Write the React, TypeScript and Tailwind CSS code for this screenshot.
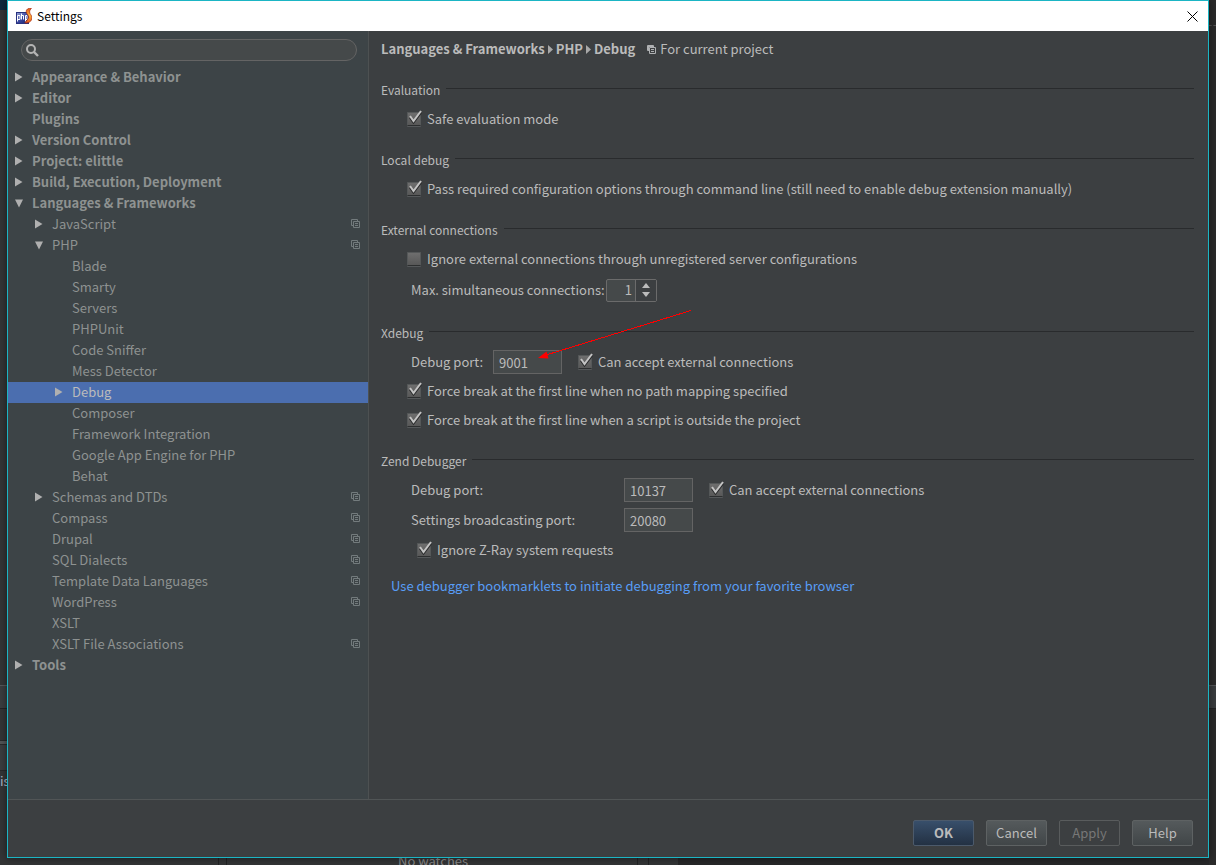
import { useId, useState, type ReactNode } from "react";

type Node = {
  label: string;
  level: number;
  state?: "open" | "closed";
  project?: boolean;
  selected?: boolean;
};

const nodes: Node[] = [
  { label: "Appearance & Behavior", level: 0, state: "closed" },
  { label: "Editor", level: 0, state: "closed" },
  { label: "Plugins", level: 0 },
  { label: "Version Control", level: 0, state: "closed" },
  { label: "Project: elittle", level: 0, state: "closed" },
  { label: "Build, Execution, Deployment", level: 0, state: "closed" },
  { label: "Languages & Frameworks", level: 0, state: "open" },
  { label: "JavaScript", level: 1, state: "closed", project: true },
  { label: "PHP", level: 1, state: "open", project: true },
  { label: "Blade", level: 2 },
  { label: "Smarty", level: 2 },
  { label: "Servers", level: 2 },
  { label: "PHPUnit", level: 2 },
  { label: "Code Sniffer", level: 2 },
  { label: "Mess Detector", level: 2 },
  { label: "Debug", level: 2, state: "closed", selected: true },
  { label: "Composer", level: 2 },
  { label: "Framework Integration", level: 2 },
  { label: "Google App Engine for PHP", level: 2 },
  { label: "Behat", level: 2 },
  { label: "Schemas and DTDs", level: 1, state: "closed", project: true },
  { label: "Compass", level: 1, project: true },
  { label: "Drupal", level: 1, project: true },
  { label: "SQL Dialects", level: 1, project: true },
  { label: "Template Data Languages", level: 1, project: true },
  { label: "WordPress", level: 1, project: true },
  { label: "XSLT", level: 1 },
  { label: "XSLT File Associations", level: 1, project: true },
  { label: "Tools", level: 0, state: "closed" },
];

const indents = ["pl-[7px]", "pl-[27px]", "pl-[47px]"];

function Disclosure({ state }: { state?: "open" | "closed" }) {
  return (
    <svg className="h-2.5 w-[9px] shrink-0" viewBox="0 0 9 10" fill="#b0b0b0" aria-hidden="true">
      {state === "closed" && <path d="M0 0.5 7.5 5 0 9.5Z" />}
      {state === "open" && <path d="M0 1.5H8L4 9.5Z" />}
    </svg>
  );
}

function ProjectIcon() {
  return (
    <svg className="h-[9px] w-[9px] shrink-0" viewBox="0 0 9 9" fill="none" stroke="#737b7d" aria-hidden="true">
      <path d="M2.5 6.5H0.5V0.5H6.5V2.5M2.5 2.5H8.5V8.5H2.5ZM4 4.5H7M4 6.5H7" />
    </svg>
  );
}

function PhpStormIcon() {
  return (
    <svg className="h-4 w-4 shrink-0" viewBox="0 0 16 16" aria-hidden="true">
      <defs>
        <linearGradient id="box" x1="0" y1="0" x2="1" y2="1">
          <stop offset="0" stopColor="#9aa9dc" />
          <stop offset="0.5" stopColor="#3a479f" />
          <stop offset="1" stopColor="#151c62" />
        </linearGradient>
        <linearGradient id="flame" x1="0" y1="0" x2="0" y2="1">
          <stop offset="0" stopColor="#e0571a" />
          <stop offset="0.5" stopColor="#ffb13a" />
          <stop offset="1" stopColor="#e3541c" />
        </linearGradient>
      </defs>
      <rect x="0.5" y="4.5" width="12" height="11" fill="url(#box)" stroke="#29337f" />
      <path d="M1.5 13.5V7.5H4V11.5H1.5M5.5 5.5V11.5M5.5 7.5H7.5V11.5M9.5 13.5V7.5H11V11.5H9.5" fill="none" stroke="#fff" />
      <path d="M15.5 0.3C12.2 0 10 1.2 10.2 3.8 10.4 6.2 12.8 7.2 12.6 9.2 12.4 11.2 10.8 12.4 8.8 14.8 12.6 15.6 15.8 13.4 15.9 9.8 16 7.2 13.6 6 13.6 4 13.6 2.6 14.4 1.2 15.5 0.3Z" fill="url(#flame)" stroke="#a5260e" strokeWidth="0.7" />
    </svg>
  );
}

function Check({ label, checked = true }: { label: string; checked?: boolean }) {
  return (
    <label className="flex items-center gap-1.5">
      <span className="relative flex h-3.5 w-3.5">
        <input
          type="checkbox"
          defaultChecked={checked}
          className="peer h-3.5 w-3.5 appearance-none rounded-[1px] border border-[#555859] border-b-[#2d2f30] bg-linear-to-b from-[#6e6e6e] to-[#585858] shadow-[0_1px_0_#55585a]"
        />
        <svg
          className="pointer-events-none absolute -top-0.5 left-0 hidden h-4 w-4 peer-checked:block"
          viewBox="0 0 16 16"
          fill="none"
          aria-hidden="true"
        >
          <path d="M3 7.5 6.5 12.5 14 2.5" stroke="#2a2b2c" strokeWidth="2.2" />
          <path d="M3 6 6.5 11 14 1" stroke="#c4c4c4" strokeWidth="2" />
        </svg>
      </span>
      {label}
    </label>
  );
}

function PortInput({ id, value }: { id: string; value: string }) {
  return (
    <input
      id={id}
      type="text"
      defaultValue={value}
      className="h-6 w-[69px] border border-[#646464] bg-[#45494a] px-[5px] text-[13px] text-[#bbbbbb] outline-none"
    />
  );
}

function Section({ title, tight, children }: { title: string; tight?: boolean; children: ReactNode }) {
  return (
    <section className="flex flex-col gap-[7px]">
      <h2 className="flex items-center gap-1.5 text-xs leading-5">
        {title}
        <span className="mb-[3px] h-px flex-1 bg-[#292b2d]" />
      </h2>
      <div className={tight ? "flex flex-col gap-[5px]" : "flex flex-col gap-1.5"}>{children}</div>
    </section>
  );
}

function CheckRow({ label, checked }: { label: string; checked?: boolean }) {
  return (
    <div className="flex h-6 items-center pl-[26px]">
      <Check label={label} checked={checked} />
    </div>
  );
}

function Crumb() {
  return (
    <svg className="h-[9px] w-[5px]" viewBox="0 0 5 9" fill="#a8a8a8" aria-hidden="true">
      <path d="M0 0 5 4.5 0 9Z" />
    </svg>
  );
}

function Tree() {
  return (
    <ul className="mt-1.5 text-[13px] text-[#8e9291]">
      {nodes.map((n) => (
        <li
          key={n.label}
          className={`flex h-[21px] items-center gap-2 pr-2 pb-0.5 ${indents[n.level]} ${n.level === 0 ? "font-bold" : ""} ${
            n.selected ? "bg-[#4b6eaf] text-[#bbbbbb]" : ""
          }`}
        >
          <Disclosure state={n.state} />
          <span className="flex-1 whitespace-nowrap leading-5">{n.label}</span>
          {n.project && <ProjectIcon />}
        </li>
      ))}
    </ul>
  );
}

function Spinner({ id }: { id: string }) {
  const [value, setValue] = useState(1);
  return (
    <div className="flex h-[23px] w-[51px] rounded-[2px] border border-[#6b6b6b] bg-[#45494a]">
      <input
        id={id}
        type="text"
        inputMode="numeric"
        value={value}
        onChange={(e) => setValue(Number(e.target.value) || 0)}
        className="w-[29px] border-r border-[#6b6b6b] bg-transparent pr-[3px] text-right text-[13px] text-[#bbbbbb] outline-none"
      />
      <span className="flex flex-1 flex-col items-center justify-center gap-1 bg-[#3c3f41]">
        <button type="button" aria-label="Increase" onClick={() => setValue(value + 1)}>
          <svg className="block h-[5px] w-2" viewBox="0 0 8 5" fill="#bbbbbb">
            <path d="M0 5H8L4 0Z" />
          </svg>
        </button>
        <button type="button" aria-label="Decrease" onClick={() => setValue(value - 1)}>
          <svg className="block h-[5px] w-2" viewBox="0 0 8 5" fill="#bbbbbb">
            <path d="M0 0H8L4 5Z" />
          </svg>
        </button>
      </span>
    </div>
  );
}

function Backdrop() {
  return (
    <div className="absolute inset-0 flex overflow-hidden bg-[#333536] text-[13px] text-[#8a8a8a]" aria-hidden="true">
      <div className="flex w-[7px] flex-col whitespace-nowrap">
        <div className="h-2.5 bg-[#0d293e]" />
        <div className="h-[675px]" />
        <div className="h-6 border-y border-t-[#55585a] border-b-[#222324] bg-[#3a3d3f]" />
        <div className="h-[31px]" />
        <div className="h-[5px] border-y border-[#28292a] bg-[#515456]" />
        <div className="h-[26px] border-b border-[#28292a] bg-[#3a3d3f]" />
        <div className="text-[#a9b7c6]">is</div>
      </div>
      <div className="flex flex-1 items-end">
        <div className="h-2 w-[212px] border-r border-[#222324]" />
        <div className="h-2 w-2 border-r border-[#222324]" />
        <div className="flex h-3.5 w-[411px] border-r border-[#222324] pl-[171px] leading-5">No watches</div>
        <div className="h-2 w-[11px] border-r border-[#222324]" />
        <div className="h-2 w-[29px]" />
        <div className="h-2 flex-1 bg-[#272829]" />
      </div>
      <div className="flex w-[7px] flex-col bg-[#2b2b2b]">
        <div className="h-[26px] border-b border-dashed border-[#555555]" />
        <div className="h-[659px]" />
        <div className="h-6 border-y border-t-[#55585a] border-b-[#222324] bg-[#3a3d3f]" />
      </div>
    </div>
  );
}

const buttonBase = "h-[26px] w-[61px] rounded-[2px] border text-[13px]";

export default function App() {
  const uid = useId();
  return (
    <div className="relative flex min-h-screen flex-col pr-[7px] pb-[7px] pl-[7px] font-['Noto_Sans_CJK_SC','Noto_Sans',sans-serif]">
      <Backdrop />
      <div className="relative flex flex-1 flex-col border border-[#1bb5c4] bg-[#3c3f41] text-[13px] leading-5 text-[#bbbbbb] shadow-[0_0_8px_rgba(0,0,0,0.5)]">
        <header className="flex h-[30px] items-center gap-[5px] bg-white pr-2.5 pl-2 text-xs text-black">
          <PhpStormIcon />
          <h1 className="flex-1">Settings</h1>
          <button type="button" aria-label="Close">
            <svg className="block h-[11px] w-[11px]" viewBox="0 0 11 11" fill="none" stroke="#000">
              <path d="M0.5 0.5 10.5 10.5M10.5 0.5 0.5 10.5" />
            </svg>
          </button>
        </header>

        <div className="flex flex-1">
          <aside className="w-[361px] shrink-0 border-r border-[#4d5152] bg-[#3d4447]">
            <label className="mt-2 mr-[11px] ml-[13px] flex h-[22px] items-center rounded-full border border-[#646464] bg-[#45494a] pl-1">
              <svg className="h-[13px] w-[13px]" viewBox="0 0 13 13" fill="none" stroke="#b4b4b4" aria-hidden="true">
                <circle cx="5" cy="5" r="4" strokeWidth="2" />
                <path d="M8 8 12 12" strokeWidth="2.4" />
              </svg>
              <input type="search" aria-label="Search settings" className="min-w-0 flex-1 bg-transparent px-1 outline-none" />
            </label>
            <Tree />
          </aside>

          <main className="flex min-w-0 flex-1 flex-col gap-[19px] pt-2 pr-3.5 pl-3">
            <div className="flex items-center gap-3 pb-0.5">
              <nav className="flex items-center gap-[3px] font-bold">
                <span>Languages &amp; Frameworks</span>
                <Crumb />
                <span>PHP</span>
                <Crumb />
                <span>Debug</span>
              </nav>
              <span className="flex items-center gap-1">
                <svg className="h-[9px] w-[9px]" viewBox="0 0 9 9" fill="none" stroke="#afb1b3" aria-hidden="true">
                  <path d="M2 5.5H0.5V0.5H6.5V2M0.5 1.5H6.5M1.5 1V6M2.5 2.5H8.5V8.5H2.5ZM4 4.5H7M4 6.5H7" />
                </svg>
                For current project
              </span>
            </div>

            <Section title="Evaluation">
              <CheckRow label="Safe evaluation mode" />
            </Section>

            <Section title="Local debug">
              <CheckRow label="Pass required configuration options through command line (still need to enable debug extension manually)" />
            </Section>

            <Section title="External connections" tight>
              <CheckRow label="Ignore external connections through unregistered server configurations" checked={false} />
              <div className="flex h-7 items-center pl-[30px]">
                <label htmlFor={`${uid}-max`} className="w-[195px] whitespace-nowrap">
                  Max. simultaneous connections:
                </label>
                <Spinner id={`${uid}-max`} />
              </div>
            </Section>

            <Section title="Xdebug" tight>
              <div className="flex h-6 items-center pl-[30px]">
                <label htmlFor={`${uid}-xport`} className="w-[82px] whitespace-nowrap">
                  Debug port:
                </label>
                <div className="relative mr-4 flex">
                  <PortInput id={`${uid}-xport`} value="9001" />
                  <svg
                    className="pointer-events-none absolute -top-10 left-[45px] h-[50px] w-[154px]"
                    viewBox="0 0 154 50"
                    aria-hidden="true"
                  >
                    <path d="M153 0.5 8 45" stroke="#f00" fill="none" shapeRendering="crispEdges" />
                    <path d="M0 48 8.5 41.5 10.5 48.5Z" fill="#f00" />
                  </svg>
                </div>
                <Check label="Can accept external connections" />
              </div>
              <CheckRow label="Force break at the first line when no path mapping specified" />
              <CheckRow label="Force break at the first line when a script is outside the project" />
            </Section>

            <Section title="Zend Debugger">
              <div className="flex h-6 items-center pl-[30px]">
                <label htmlFor={`${uid}-zport`} className="w-[213px]">
                  Debug port:
                </label>
                <div className="mr-4 flex">
                  <PortInput id={`${uid}-zport`} value="10137" />
                </div>
                <Check label="Can accept external connections" />
              </div>
              <div className="flex h-6 items-center pl-[30px]">
                <label htmlFor={`${uid}-bport`} className="w-[213px]">
                  Settings broadcasting port:
                </label>
                <PortInput id={`${uid}-bport`} value="20080" />
              </div>
              <div className="flex h-6 items-center pl-9">
                <Check label="Ignore Z-Ray system requests" />
              </div>
              <a href="#bookmarklets" className="mt-2 self-start pl-2.5 text-[#589df6]">
                Use debugger bookmarklets to initiate debugging from your favorite browser
              </a>
            </Section>
          </main>
        </div>

        <footer className="flex h-[58px] items-center justify-end gap-3 border-t border-[#515556] pt-2 pr-[15px]">
          <button type="button" className={`${buttonBase} border-[#4c5a6b] bg-linear-to-b from-[#384f6b] to-[#233143] font-bold`}>
            OK
          </button>
          <button type="button" className={`${buttonBase} border-[#5e6263] bg-linear-to-b from-[#555a5c] to-[#414648]`}>
            Cancel
          </button>
          <button type="button" disabled className={`${buttonBase} border-[#595c5d] text-[#777777]`}>
            Apply
          </button>
          <button type="button" className={`${buttonBase} border-[#5e6263] bg-linear-to-b from-[#555a5c] to-[#414648]`}>
            Help
          </button>
        </footer>
      </div>
    </div>
  );
}
